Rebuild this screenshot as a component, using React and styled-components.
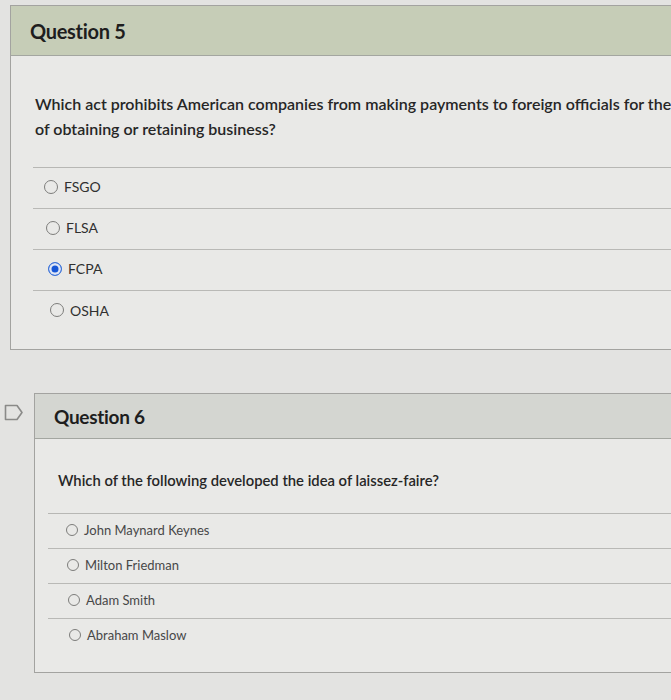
import React from 'react';
import styled, { createGlobalStyle } from 'styled-components';

const GlobalStyle = createGlobalStyle`
   html, body {
      margin: 0;
      padding: 0;
      background: #e3e3e1;
      font-family: Lato, "Open Sans", "Liberation Sans", sans-serif;
      overflow: hidden;
   }
`;

const Page = styled.div`
   width: 671px;
   height: 700px;
   overflow: hidden;
   padding-top: 5px;
   box-sizing: border-box;
`;

const QuestionRow = styled.div`
   display: grid;
   grid-template-columns: ${props => props.$indent}px 1fr;
   margin-bottom: ${props => props.$gap || 0}px;
`;

const Gutter = styled.div`
   display: flex;
   justify-content: flex-start;
   padding: 11px 0 0 4px;
`;

const Card = styled.div`
   border: 1px solid #a3a3a0;
   border-right: none;
   background: #e9e9e7;
   width: calc(100% + 40px);
`;

const Header = styled.div`
   height: ${props => props.$h}px;
   background: ${props => props.$bg};
   border-bottom: 1px solid #a3a6a0;
   display: flex;
   align-items: center;
   padding-left: 19px;
   font-size: ${props => props.$size}px;
   font-weight: 700;
   color: #1e1e1e;
   letter-spacing: -0.3px;
`;

const Body = styled.div`
   padding: ${props => props.$top}px 0 ${props => props.$bottom}px ${props => props.$left}px;
`;

const Prompt = styled.div`
   font-size: ${props => props.$size}px;
   line-height: ${props => props.$lh}px;
   font-weight: 600;
   color: #262626;
   white-space: nowrap;
   padding-left: ${props => props.$indent}px;
   margin-bottom: ${props => props.$after}px;
`;

const Options = styled.div`
   border-top: 1px solid #b7b7b4;
`;

const Option = styled.label`
   display: flex;
   align-items: center;
   gap: ${props => props.$gap}px;
   height: ${props => props.$h}px;
   padding-left: ${props => props.$pad}px;
   padding-bottom: 3px;
   border-bottom: ${props => props.$last ? 'none' : '1px solid #b9b9b6'};
   font-size: ${props => props.$size}px;
   color: ${props => props.$color};
   box-sizing: border-box;
`;

const Radio = styled.span`
   width: ${props => props.$d}px;
   height: ${props => props.$d}px;
   border-radius: 50%;
   box-sizing: border-box;
   border: 1.5px solid ${props => props.$checked ? '#3d74d8' : '#7d7d7b'};
   background: ${props => props.$checked ? '#1656d6' : 'transparent'};
   box-shadow: ${props => props.$checked ? 'inset 0 0 0 2.5px #dfe6f5' : 'none'};
   flex-shrink: 0;
`;

const BookmarkIcon = () => (
   <svg width="20" height="17" viewBox="0 0 20 17">
      <path
         d="M1.5 1.5 H13 L18 8.5 L13 15.5 H1.5 Z"
         fill="none"
         stroke="#8a8a88"
         strokeWidth="1.6"
         strokeLinejoin="round"
      />
   </svg>
);

const q5 = ['FSGO', 'FLSA', 'FCPA', 'OSHA'];
const q6 = ['John Maynard Keynes', 'Milton Friedman', 'Adam Smith', 'Abraham Maslow'];

export default function App() {
   return (
      <>
         <GlobalStyle />
         <Page>
            <QuestionRow $indent={10} $gap={43}>
               <div />
               <Card>
                  <Header $h={49} $bg="#c6cdb7" $size={20}>Question 5</Header>
                  <Body $top={35} $bottom={17} $left={22}>
                     <Prompt $size={16} $lh={25} $indent={2} $after={26}>
                        Which act prohibits American companies from making payments to foreign officials for the
                        <br />
                        of obtaining or retaining business?
                     </Prompt>
                     <Options>
                        {q5.map((o, i) => (
                           <Option
                              key={o}
                              $h={41}
                              $pad={11 + i * 2}
                              $gap={6}
                              $size={14}
                              $color="#303030"
                              $last={i === q5.length - 1}
                           >
                              <Radio $d={14} $checked={o === 'FCPA'} />
                              {o}
                           </Option>
                        ))}
                     </Options>
                  </Body>
               </Card>
            </QuestionRow>

            <QuestionRow $indent={34}>
               <Gutter>
                  <BookmarkIcon />
               </Gutter>
               <Card>
                  <Header $h={44} $bg="#d4d6d1" $size={19}>Question 6</Header>
                  <Body $top={30} $bottom={18} $left={13}>
                     <Prompt $size={14.8} $lh={22} $indent={10} $after={22}>
                        Which of the following developed the idea of laissez-faire?
                     </Prompt>
                     <Options>
                        {q6.map((o, i) => (
                           <Option
                              key={o}
                              $h={35}
                              $pad={18 + i}
                              $gap={6}
                              $size={13}
                              $color="#474747"
                              $last={i === q6.length - 1}
                           >
                              <Radio $d={12} />
                              {o}
                           </Option>
                        ))}
                     </Options>
                  </Body>
               </Card>
            </QuestionRow>
         </Page>
      </>
   );
}
